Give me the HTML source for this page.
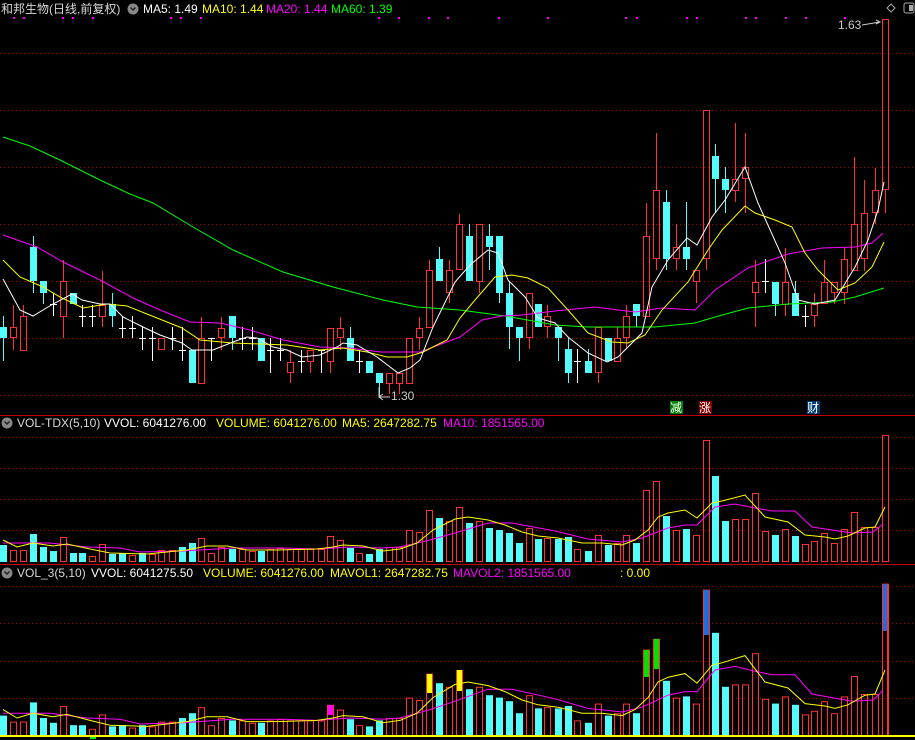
<!DOCTYPE html>
<html><head><meta charset="utf-8"><style>
html,body{margin:0;padding:0;background:#000;width:915px;height:740px;overflow:hidden}
svg{display:block}
text{font-family:"Liberation Sans","Noto Sans CJK SC",sans-serif;font-size:12px}
</style></head><body>
<svg id="s" width="915" height="740" xmlns="http://www.w3.org/2000/svg">
<rect width="915" height="740" fill="#000"/>
<g id="g"></g>
<text x="1" y="13" fill="#d8d8d8" font-size="13">和邦生物(日线,前复权)</text>
<circle cx="133" cy="9" r="5.5" fill="#888"/><path d="M130.5 7.5l2.5 2.5 2.5-2.5" stroke="#222" stroke-width="1.5" fill="none"/>
<text x="143" y="13" fill="#fff">MA5: 1.49</text>
<text x="202" y="13" fill="#ffff00">MA10: 1.44</text>
<text x="266" y="13" fill="#ff00ff">MA20: 1.44</text>
<text x="331" y="13" fill="#00ff00">MA60: 1.39</text>
<path d="M891 4l4 4-4 4-4-4z" stroke="#aaa" fill="none"/>
<rect x="904" y="3" width="10" height="10" rx="2" stroke="#aaa" fill="none"/><rect x="909" y="5" width="4" height="6" fill="#aaa"/>
<text x="838" y="29" fill="#ccc">1.63</text>
<path d="M862 25 L880 22 M876 20 l4 2 -4 2" stroke="#ccc" fill="none"/>
<text x="391" y="400" fill="#ccc">1.30</text>
<path d="M379 387 L379 397 L390 397 M383 394 l-4 3 4 3" stroke="#ccc" fill="none"/>
<rect x="670" y="401" width="13" height="13" fill="#008000"/><text x="670" y="412" fill="#fff">减</text>
<rect x="699" y="401" width="13" height="13" fill="#800000"/><text x="699" y="412" fill="#fff">涨</text>
<rect x="807" y="401" width="13" height="13" fill="#003a70"/><text x="807" y="412" fill="#fff">财</text>
<circle cx="7" cy="423" r="5.5" fill="#888"/><path d="M4.5 421.5l2.5 2.5 2.5-2.5" stroke="#222" stroke-width="1.5" fill="none"/>
<text x="17" y="427" fill="#d8d8d8">VOL-TDX(5,10)</text>
<text x="104" y="427" fill="#fff">VVOL: 6041276.00</text>
<text x="216" y="427" fill="#ffff00">VOLUME: 6041276.00</text>
<text x="342" y="427" fill="#ffff00">MA5: 2647282.75</text>
<text x="443" y="427" fill="#ff00ff">MA10: 1851565.00</text>
<circle cx="7" cy="573" r="5.5" fill="#888"/><path d="M4.5 571.5l2.5 2.5 2.5-2.5" stroke="#222" stroke-width="1.5" fill="none"/>
<text x="17" y="577" fill="#d8d8d8">VOL_3(5,10)</text>
<text x="91" y="577" fill="#fff">VVOL: 6041275.50</text>
<text x="203" y="577" fill="#ffff00">VOLUME: 6041276.00</text>
<text x="330" y="577" fill="#ffff00">MAVOL1: 2647282.75</text>
<text x="453" y="577" fill="#ff00ff">MAVOL2: 1851565.00</text>
<text x="620" y="577" fill="#ffff00">: 0.00</text>
</svg>
<script>
var R="#ff3232",C="#54fcfc",NS="http://www.w3.org/2000/svg",g=document.getElementById("g"),h="";
function ln(x1,y1,x2,y2,c,w,d){h+='<line x1="'+x1+'" y1="'+y1+'" x2="'+x2+'" y2="'+y2+'" stroke="'+c+'" stroke-width="'+(w||1)+'"'+(d?' stroke-dasharray="'+d+'"':'')+'/>';}
function rc(x,y,w,hh,f,s){h+='<rect x="'+x+'" y="'+y+'" width="'+w+'" height="'+hh+'" fill="'+(f||"none")+'"'+(s?' stroke="'+s+'"':'')+'/>';}
function pl(p,c){h+='<polyline fill="none" stroke="'+c+'" stroke-width="1" points="'+p+'"/>';}
// grids
[53,110,167,224,281,338,395].forEach(function(y){ln(0,y+.5,915,y+.5,"#b00000",1,"1 3");});
[437,468,499,530].forEach(function(y){ln(0,y+.5,915,y+.5,"#b00000",1,"1 3");});
[586,623,661,698].forEach(function(y){ln(0,y+.5,915,y+.5,"#b00000",1,"1 3");});
ln(0,415.5,915,415.5,"#c00000");ln(0,564.5,915,564.5,"#c00000");
// dots
[13,23,62,72,92,170,180,200,378,398,428,447,498,547,625,636,686,696,745,755,785,805,844].forEach(function(x){rc(x,17,2,2,"#ff00ff");});
// candles [x,type,bt,bb,wt,wb]
var K=[[3,'c',327,338,316,361],[13,'r',327,338,305,350],[23,'r',316,351,305,351],[33,'c',247,281,236,293],[43,'c',281,293,281,304],[53,'w',304,304,293,316],[63,'r',281,317,260,338],[73,'c',293,304,293,304],[82,'w',316,316,305,327],[92,'w',316,316,305,327],[102,'r',305,317,271,327],[112,'c',304,316,293,327],[122,'w',328,328,316,338],[132,'w',328,328,316,338],[142,'w',338,338,327,350],[152,'w',338,338,327,361],[161,'r',338,350,338,350],[172,'w',338,338,327,350],[182,'w',350,350,327,361],[192,'c',350,383,350,383],[201,'r',338,384,317,384],[211,'w',338,338,338,361],[221,'r',328,338,317,350],[232,'c',316,338,316,350],[242,'w',338,338,327,350],[252,'w',338,338,327,350],[261,'c',338,361,338,361],[270,'w',350,350,338,373],[280,'w',350,350,338,361],[290,'r',362,373,350,383],[301,'w',361,361,350,373],[310,'r',350,362,350,373],[321,'w',350,350,350,373],[330,'r',328,362,328,373],[340,'r',328,338,317,350],[350,'c',338,361,327,361],[359,'w',361,361,350,373],[369,'c',361,373,361,373],[379,'c',373,383,373,397],[389,'r',373,384,373,394],[399,'r',373,384,373,394],[409,'r',338,384,338,384],[419,'r',328,338,317,350],[429,'r',270,328,260,328],[439,'c',259,281,247,281],[449,'r',270,293,260,303],[459,'r',224,270,214,270],[469,'c',236,281,224,281],[479,'r',224,282,224,293],[489,'c',236,247,224,270],[499,'c',236,293,236,303],[509,'c',293,327,281,349],[519,'c',327,338,327,361],[529,'r',293,338,293,349],[538,'c',304,327,304,327],[547,'r',316,327,305,338],[558,'c',327,338,327,361],[568,'c',349,373,338,383],[577,'w',361,361,349,383],[588,'c',361,373,349,373],[598,'r',327,373,327,383],[608,'c',338,361,338,361],[617,'r',338,362,327,362],[626,'r',316,338,305,349],[636,'c',304,316,304,327],[646,'r',236,317,203,317],[656,'r',190,259,133,270],[666,'c',202,259,190,270],[676,'r',247,259,224,270],[686,'c',247,259,202,270],[696,'r',270,282,270,303],[706,'r',110,259,110,270],[715,'c',156,179,144,213],[725,'c',179,190,167,213],[735,'r',179,191,123,202],[745,'r',167,179,133,213],[755,'r',282,293,260,327],[765,'w',281,281,259,293],[775,'c',282,304,282,316],[785,'r',282,305,248,316],[795,'c',293,316,281,316],[805,'w',316,316,305,327],[814,'r',304,316,293,327],[824,'r',282,304,260,304],[834,'r',282,293,282,304],[844,'r',259,293,248,304],[854,'r',224,271,157,271],[864,'r',213,259,180,271],[875,'r',190,213,168,224],[885,'r',19,190,19,213]];
K.forEach(function(k){var x=k[0];
 if(k[1]=='w'){ln(x+.5,k[4],x+.5,k[5],"#fff");ln(x-3,k[2]+.5,x+4,k[2]+.5,"#fff");}
 else if(k[1]=='c'){ln(x+.5,k[4],x+.5,k[5],C);rc(x-3,k[2],7,Math.max(1,k[3]-k[2]),C);}
 else{ln(x+.5,k[4],x+.5,k[2],R);ln(x+.5,k[3],x+.5,k[5],R);rc(x-2.5,k[2]+.5,6,Math.max(1,k[3]-k[2]-1),"none",R);}
});
pl("3,137 30,146 60,160 100,180 130,194 153,203 193,227 233,250 283,272 333,287 383,300 417,307 460,310 505,316 555,325 588,327 655,327 695,323 715,317 748,308 788,304 832,302 855,297 884,288","#00ff00");
pl("3,235 37,247 63,262 100,280 133,298 160,310 190,322 220,323 250,330 283,340 320,347 350,348 380,352 420,352 460,337 482,320 502,316 522,315 555,311 595,307 618,310 635,312 662,308 695,310 715,290 748,268 788,254 822,248 855,247 872,243 883,233","#ff00ff");
pl("3,260 20,277 43,287 60,297 83,308 107,304 127,306 157,318 182,328 200,340 233,343 260,344 287,345 320,350 343,348 367,352 387,357 407,357 423,352 447,340 460,318 475,300 495,277 512,275 528,278 548,288 568,310 588,333 612,342 628,343 645,335 662,310 688,282 708,250 722,230 745,206 755,213 775,220 792,227 805,253 818,270 838,290 855,283 872,267 884,242","#ffff00");
pl("3,279 20,310 33,316 53,304 72,294 82,300 100,304 110,304 123,317 143,327 160,335 182,343 192,350 213,350 233,342 247,337 257,338 273,347 287,350 302,357 320,355 337,347 343,343 357,345 377,357 398,373 410,368 420,360 433,327 455,282 470,265 488,250 498,253 508,280 525,297 538,318 555,323 568,337 588,353 607,362 618,357 628,347 642,333 652,287 668,260 687,238 697,245 712,217 725,200 745,167 758,203 785,263 798,300 815,304 835,300 855,267 868,240 878,210 884,182","#fff");
// volumes
var V=[['c',545],['r',550],['r',550],['c',534],['c',547],['c',551],['r',537],['c',553],['c',553],['r',556],['r',544],['c',554],['c',553],['r',555],['c',553],['r',554],['r',550],['r',550],['c',547],['c',543],['r',538],['r',553],['r',547],['c',549],['r',549],['r',551],['c',551],['r',549],['r',548],['r',549],['r',549],['r',549],['r',549],['r',536],['r',540],['c',548],['r',553],['c',554],['c',549],['r',547],['r',547],['r',530],['r',532],['r',510],['c',518],['r',521],['r',507],['c',523],['r',521],['c',528],['c',530],['c',533],['c',543],['r',528],['c',539],['r',538],['c',539],['c',537],['r',549],['c',551],['r',535],['c',545],['r',543],['r',535],['c',543],['r',490],['r',481],['c',516],['r',530],['c',529],['r',535],['r',440],['c',476],['c',521],['r',519],['r',519],['r',493],['r',531],['c',535],['r',529],['c',536],['r',544],['r',541],['r',533],['r',543],['r',529],['r',512],['r',527],['r',527],['r',435]];
function p3(y){return 736-(562-y)*1.2;}
V.forEach(function(v,i){var x=K[i][0],t=v[1],t3=p3(t);
 if(v[0]=='c'){rc(x-3,t,7,562-t,C);rc(x-3,t3,7,736-t3,C);}
 else{rc(x-2.5,t+.5,6,562-t-1,"none",R);rc(x-2.5,t3+.5,6,736-t3-1,"none",R);}
});
// special fills panel 3
[[330,705,715,"#ff00ff"],[429,674,693,"#ffff00"],[459,670,691,"#ffff00"],[646,650,677,"#00e000"],[656,639,669,"#00e000"],[706,590,635,"#1a70e0"],[885,584,631,"#1a70e0"]].forEach(function(s){rc(s[0]-2,s[1],5,s[2]-s[1],s[3]);});
ln(887.5,584,887.5,736,R);
rc(0,735,915,2,"#ffff00");rc(90,737,6,2,"#00ff00");
var Y2="3,540 17,547 33,543 53,546 67,544 90,549 110,553 147,554 167,552 187,550 207,546 227,546 247,550 277,550 317,549 333,547 343,545 363,546 383,551 400,549 417,543 433,530 455,519 468,517 488,520 505,525 522,532 538,536 558,538 582,543 602,543 622,545 635,540 648,530 658,517 668,513 685,510 697,518 712,503 722,501 745,495 765,517 788,522 805,535 825,537 835,539 848,536 865,528 875,527 885,507";
var M2="3,543 50,543 87,547 120,548 140,552 183,551 233,548 283,548 317,549 350,547 383,548 400,547 430,540 455,533 488,523 512,523 555,531 588,539 622,542 642,538 668,528 685,525 697,525 715,507 735,504 755,508 772,511 795,511 812,527 832,530 852,533 873,532 883,524";
function tr(s){return s.split(" ").map(function(p){var a=p.split(",");return a[0]+","+p3(+a[1]).toFixed(1);}).join(" ");}
pl(M2,"#ff00ff");pl(Y2,"#ffff00");pl(tr(M2),"#ff00ff");pl(tr(Y2),"#ffff00");
g.innerHTML=h;
</script>
</body></html>
